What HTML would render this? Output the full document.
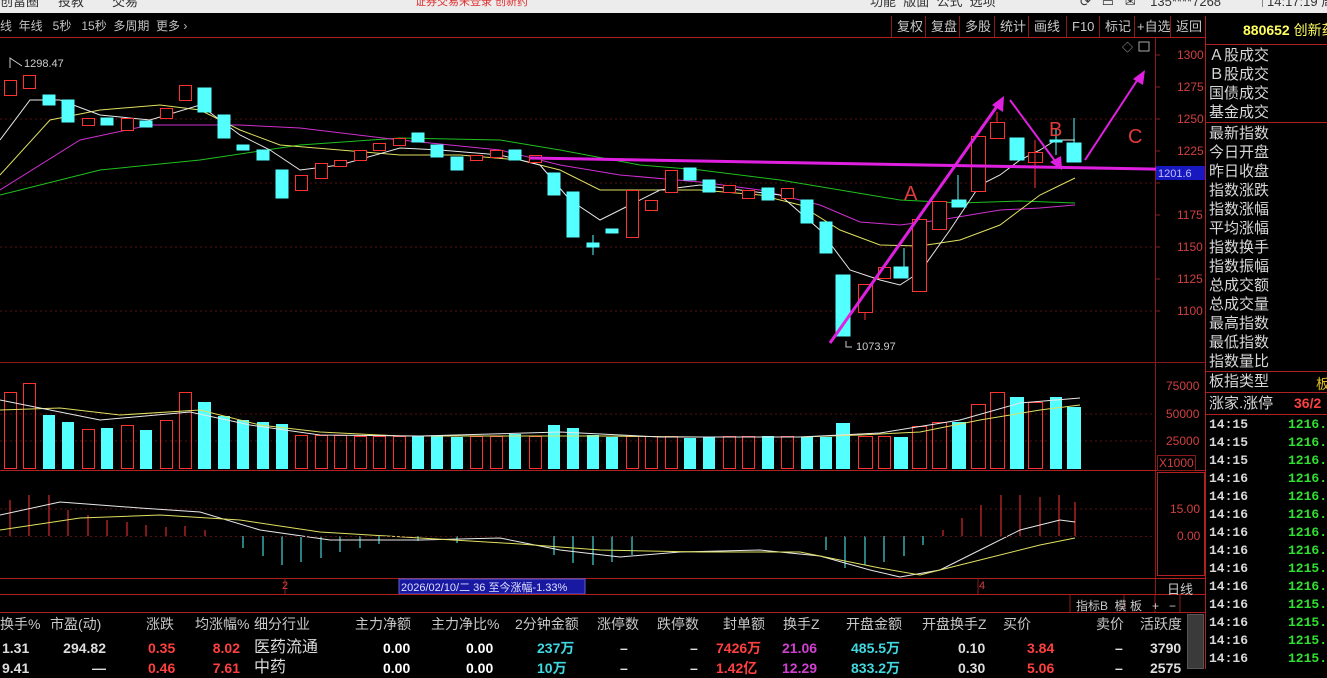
<!DOCTYPE html>
<html><head><meta charset="utf-8"><style>
*{margin:0;padding:0;box-sizing:border-box}
body{width:1327px;height:669px;background:#000;overflow:hidden;position:relative;font-family:"Liberation Sans","Noto Sans CJK SC",sans-serif;color:#c8c8c8}
.a{position:absolute;white-space:nowrap}
#top{left:0;top:0;width:1327px;height:13px;background:#ececec;color:#333;font-size:13px;line-height:10px;overflow:hidden}
.tab{font-size:12px;color:#c0c0c0;top:17px}
.btn{top:16px;height:21px;font-size:13px;color:#c8c8c8;line-height:21px;border-left:1px solid #8a1a1a;padding:0 5px}
.ax{color:#d04040;font-size:12px;font-family:"Liberation Sans",sans-serif}
.lbl{font-size:15px;color:#d8d8d8;left:1209px;line-height:19px}
.tm{left:1209px;font-size:13px;font-weight:bold;color:#d8d8d8;font-family:"Liberation Mono",monospace}
.pv{left:1288px;font-size:13px;font-weight:bold;color:#30e030;font-family:"Liberation Mono",monospace}
.th{top:614px;font-size:14px;color:#c8c8c8}
.td{font-size:14px;font-weight:bold;text-align:right}
</style></head><body>
<div id="top" class="a"><span class="a" style="left:0;top:-3px">创富圈</span><span class="a" style="left:58px;top:-3px">投教</span><span class="a" style="left:112px;top:-3px">交易</span><span class="a" style="left:415px;top:-3px;color:#e03030;font-size:11px">证券交易未登录 创新药</span><span class="a" style="left:870px;top:-3px">功能 &nbsp;版面 &nbsp;公式 &nbsp;选项</span><span class="a" style="left:1080px;top:-3px">⟳ &nbsp; ▭ &nbsp; ✉ &nbsp;&nbsp; 135****7268</span><span class="a" style="left:1262px;top:-3px;border-left:1px solid #888;padding-left:4px">14:17:19 周四</span></div>
<span class="a tab" style="left:0">线 &nbsp;年线 &nbsp; 5秒 &nbsp; 15秒 &nbsp;多周期 &nbsp;更多 ›</span>
<span class="a btn" style="left:891px">复权</span><span class="a btn" style="left:925px">复盘</span><span class="a btn" style="left:959px">多股</span><span class="a btn" style="left:994px">统计</span><span class="a btn" style="left:1028px">画线</span><span class="a btn" style="left:1066px">F10</span><span class="a btn" style="left:1099px">标记</span><span class="a btn" style="left:1134px;padding:0 2px">+自选</span><span class="a btn" style="left:1170px">返回</span>
<span class="a" style="left:1243px;top:20px;font-size:14px;font-weight:bold;color:#ffff60">880652 <span style="font-weight:normal">创新药</span></span>
<svg class="a" style="left:0;top:0" width="1327" height="669">
<g stroke="#8a1a1a" fill="none">
<line x1="0" y1="37.5" x2="1205" y2="37.5" stroke="#b02020"/>
<line x1="1155.5" y1="38" x2="1155.5" y2="594" stroke="#8a1a1a"/>
<line x1="1205.5" y1="16" x2="1205.5" y2="669" stroke="#b02020"/>
<line x1="0" y1="362.5" x2="1205" y2="362.5"/>
<line x1="0" y1="470.5" x2="1205" y2="470.5" stroke="#b02020"/>
<line x1="0" y1="578.5" x2="1205" y2="578.5" stroke="#b02020"/>
<line x1="0" y1="594.5" x2="1205" y2="594.5" stroke="#b02020"/>
<line x1="0" y1="612.5" x2="1205" y2="612.5" stroke="#b02020"/>
<line x1="1205" y1="44.5" x2="1327" y2="44.5" stroke="#b02020"/>
<line x1="1205" y1="122.5" x2="1327" y2="122.5" stroke="#b02020"/>
<line x1="1205" y1="371.5" x2="1327" y2="371.5" stroke="#b02020"/>
<line x1="1205" y1="392.5" x2="1327" y2="392.5" stroke="#b02020"/>
<line x1="1205" y1="414.5" x2="1327" y2="414.5" stroke="#b02020"/>
<rect x="1157.5" y="472.5" width="47" height="103" stroke="#b02020"/>
<line x1="1070" y1="594" x2="1070" y2="612"/><line x1="1124" y1="594" x2="1124" y2="612"/><line x1="1155" y1="594" x2="1155" y2="612"/><line x1="1180" y1="594" x2="1180" y2="612"/>
</g>
<g stroke="#5a1010" stroke-dasharray="2,3">
<line x1="0" y1="119" x2="1155" y2="119"/><line x1="0" y1="183" x2="1155" y2="183"/><line x1="0" y1="247" x2="1155" y2="247"/><line x1="0" y1="311" x2="1155" y2="311"/>
<line x1="0" y1="414" x2="1155" y2="414"/><line x1="0" y1="441" x2="1155" y2="441"/>
<line x1="0" y1="509" x2="1155" y2="509"/>
</g>
<g stroke="#8a1a1a"><line x1="1155" y1="55" x2="1160" y2="55"/><line x1="1155" y1="87" x2="1160" y2="87"/><line x1="1155" y1="119" x2="1160" y2="119"/><line x1="1155" y1="151" x2="1160" y2="151"/><line x1="1155" y1="183" x2="1160" y2="183"/><line x1="1155" y1="215" x2="1160" y2="215"/><line x1="1155" y1="247" x2="1160" y2="247"/><line x1="1155" y1="279" x2="1160" y2="279"/><line x1="1155" y1="311" x2="1160" y2="311"/></g>
<!-- MA lines -->
<g fill="none" stroke-width="1">
<polyline stroke="#20c020" points="0,195 100,170 200,160 300,145 400,138 500,140 560,150 640,165 700,170 780,180 840,190 900,200 960,203 1020,201 1075,203"/>
<polyline stroke="#d030d0" points="0,190 80,140 150,125 240,125 300,128 400,140 500,150 560,165 620,175 700,182 760,190 820,205 860,222 900,225 940,220 1000,210 1040,208 1075,205"/>
<polyline stroke="#e0e060" points="0,175 50,120 100,110 160,105 200,110 240,130 280,145 340,150 400,155 460,155 520,160 560,170 600,190 640,190 700,190 760,195 800,205 840,230 880,245 920,246 960,240 1000,225 1040,195 1075,178"/>
<polyline stroke="#e8e8e8" points="0,140 30,100 60,100 100,115 150,120 200,105 240,135 270,150 300,170 340,165 400,148 440,150 500,155 540,165 570,200 600,220 630,205 660,190 700,185 740,190 780,195 820,230 850,270 880,280 900,285 920,272 950,230 980,185 1000,175 1020,160 1040,150 1056,140 1075,140"/>
</g>
<!-- candles -->
<g stroke="#ff3232" fill="#000">
<rect x="4.5" y="80.5" width="12" height="15"/><rect x="23.5" y="75.5" width="12" height="13"/><rect x="82.5" y="118.5" width="12" height="7"/><rect x="121.5" y="118.5" width="12" height="12"/><rect x="160.5" y="108.5" width="12" height="10"/><rect x="179.5" y="85.5" width="12" height="15"/><rect x="295.5" y="175.5" width="12" height="15"/><rect x="315.5" y="163.5" width="12" height="15"/><rect x="334.5" y="160.5" width="12" height="6"/><rect x="354.5" y="150.5" width="12" height="10"/><rect x="373.5" y="143.5" width="12" height="7"/><rect x="393.5" y="138.5" width="12" height="7"/><rect x="470.5" y="155.5" width="12" height="5"/><rect x="490.5" y="150.5" width="12" height="7"/><rect x="529.5" y="155.5" width="12" height="7"/><rect x="626.5" y="190.5" width="12" height="47"/><rect x="645.5" y="200.5" width="12" height="10"/><rect x="665.5" y="170.5" width="12" height="22"/><rect x="723.5" y="185.5" width="12" height="7"/><rect x="742.5" y="190.5" width="12" height="8"/><rect x="781.5" y="188.5" width="12" height="10"/><rect x="858.5" y="284.5" width="14" height="28"/><rect x="878.5" y="267.5" width="12" height="11"/><rect x="912.5" y="219.5" width="14" height="72"/><rect x="932.5" y="201.5" width="14" height="28"/><rect x="971.5" y="136.5" width="14" height="55"/><rect x="990.5" y="122.5" width="14" height="16"/><rect x="1028.5" y="152.5" width="14" height="10"/>
<line x1="1035" y1="140" x2="1035" y2="188"/><line x1="997" y1="112" x2="997" y2="122"/><line x1="865" y1="312" x2="865" y2="320"/>
</g>
<g fill="#54ffff" stroke="#54ffff">
<line x1="1056" y1="128" x2="1056" y2="155"/><line x1="1074" y1="118" x2="1074" y2="143"/><line x1="904" y1="248" x2="904" y2="268"/><line x1="958" y1="175" x2="958" y2="200"/><line x1="593" y1="235" x2="593" y2="255"/>
<rect x="43" y="95" width="12" height="10"/><rect x="62" y="100" width="12" height="22"/><rect x="101" y="118" width="12" height="7"/><rect x="140" y="121" width="12" height="6"/><rect x="198" y="88" width="13" height="24"/><rect x="218" y="115" width="12" height="23"/><rect x="237" y="145" width="12" height="5"/><rect x="257" y="150" width="12" height="10"/><rect x="276" y="170" width="12" height="28"/><rect x="412" y="133" width="12" height="9"/><rect x="431" y="145" width="12" height="12"/><rect x="451" y="157" width="12" height="13"/><rect x="509" y="150" width="12" height="10"/><rect x="548" y="173" width="12" height="22"/><rect x="567" y="192" width="12" height="45"/><rect x="587" y="243" width="12" height="4"/><rect x="606" y="229" width="12" height="4"/><rect x="684" y="168" width="12" height="12"/><rect x="703" y="180" width="12" height="12"/><rect x="762" y="188" width="12" height="12"/><rect x="801" y="200" width="12" height="23"/><rect x="820" y="222" width="12" height="31"/><rect x="836" y="275" width="14" height="61"/><rect x="894" y="267" width="14" height="11"/><rect x="952" y="200" width="14" height="7"/><rect x="1010" y="138" width="14" height="22"/><rect x="1050" y="140" width="12" height="2"/><rect x="1067" y="143" width="14" height="19"/>
</g>
<!-- annotations -->
<g stroke="#e020e0" fill="none" stroke-width="3">
<line x1="530" y1="158" x2="1205" y2="170"/>
<line x1="830" y1="343" x2="1000" y2="102"/>
<line x1="1010" y1="100" x2="1058" y2="165" stroke-width="2"/>
<line x1="1085" y1="160" x2="1140" y2="76" stroke-width="2"/>
</g>
<g fill="#e020e0"><polygon points="1004,96 1003,112 992,105"/><polygon points="1062,170 1050,162 1061,156"/><polygon points="1145,70 1143,85 1133,79"/></g>
<g fill="#e03a3a" font-size="20" font-family="Liberation Sans"><text x="904" y="200">A</text><text x="1049" y="136">B</text><text x="1128" y="143">C</text></g>
<rect x="1156" y="166" width="49" height="14" fill="#1818c0"/>
<text x="1158" y="177" fill="#c0c0ff" font-size="11">1201.6</text>
<g fill="#ccc" font-size="11"><text x="24" y="67">1298.47</text><text x="856" y="350">1073.97</text></g>
<g stroke="#ccc" fill="none"><path d="M10,68 V58 L22,66"/><path d="M852,347 H846 V341"/></g>
<text x="1122" y="51" fill="#aaa" font-size="11">◇</text><rect x="1139" y="42" width="10" height="9" fill="none" stroke="#aaa"/>
<!-- volume -->
<g fill="#54ffff">
<rect x="43" y="415" width="12" height="54"/><rect x="62" y="422" width="12" height="47"/><rect x="101" y="428" width="12" height="41"/><rect x="140" y="430" width="12" height="39"/><rect x="198" y="402" width="13" height="67"/><rect x="218" y="416" width="12" height="53"/><rect x="237" y="420" width="12" height="49"/><rect x="257" y="422" width="12" height="47"/><rect x="276" y="424" width="12" height="45"/><rect x="412" y="436" width="12" height="33"/><rect x="431" y="436" width="12" height="33"/><rect x="451" y="437" width="12" height="32"/><rect x="509" y="434" width="12" height="35"/><rect x="548" y="425" width="12" height="44"/><rect x="567" y="428" width="12" height="41"/><rect x="587" y="435" width="12" height="34"/><rect x="606" y="437" width="12" height="32"/><rect x="684" y="438" width="12" height="31"/><rect x="703" y="437" width="12" height="32"/><rect x="762" y="436" width="12" height="33"/><rect x="801" y="437" width="12" height="32"/><rect x="820" y="437" width="12" height="32"/><rect x="836" y="423" width="14" height="46"/><rect x="894" y="437" width="14" height="32"/><rect x="952" y="422" width="14" height="47"/><rect x="1010" y="397" width="14" height="72"/><rect x="1050" y="397" width="12" height="72"/><rect x="1067" y="407" width="14" height="62"/>
</g>
<g fill="none" stroke="#ff3232">
<rect x="4.5" y="392.5" width="12" height="76"/><rect x="23.5" y="383.5" width="12" height="85"/><rect x="82.5" y="429.5" width="12" height="39"/><rect x="121.5" y="425.5" width="12" height="43"/><rect x="160.5" y="420.5" width="12" height="48"/><rect x="179.5" y="392.5" width="12" height="76"/><rect x="295.5" y="435.5" width="12" height="33"/><rect x="315.5" y="435.5" width="12" height="33"/><rect x="334.5" y="435.5" width="12" height="33"/><rect x="354.5" y="436.5" width="12" height="32"/><rect x="373.5" y="436.5" width="12" height="32"/><rect x="393.5" y="436.5" width="12" height="32"/><rect x="470.5" y="436.5" width="12" height="32"/><rect x="490.5" y="436.5" width="12" height="32"/><rect x="529.5" y="436.5" width="12" height="32"/><rect x="626.5" y="436.5" width="12" height="32"/><rect x="645.5" y="436.5" width="12" height="32"/><rect x="665.5" y="436.5" width="12" height="32"/><rect x="723.5" y="436.5" width="12" height="32"/><rect x="742.5" y="436.5" width="12" height="32"/><rect x="781.5" y="436.5" width="12" height="32"/><rect x="858.5" y="436.5" width="14" height="32"/><rect x="878.5" y="436.5" width="12" height="32"/><rect x="912.5" y="426.5" width="14" height="42"/><rect x="932.5" y="422.5" width="14" height="46"/><rect x="971.5" y="404.5" width="14" height="64"/><rect x="990.5" y="392.5" width="14" height="76"/><rect x="1028.5" y="402.5" width="14" height="66"/>
</g>
<polyline fill="none" stroke="#e0e060" points="0,410 60,408 120,415 200,410 260,425 320,432 400,436 500,436 600,436 700,437 800,437 860,435 920,432 980,420 1040,410 1080,405"/>
<polyline fill="none" stroke="#e8e8e8" points="0,400 50,410 100,420 190,412 250,425 320,435 420,436 560,432 660,437 800,437 880,433 960,420 1020,403 1080,398"/>
<!-- macd -->
<g stroke="#ff3232">
<line x1="10" y1="536" x2="10" y2="500"/><line x1="29" y1="536" x2="29" y2="495"/><line x1="49" y1="536" x2="49" y2="495"/><line x1="68" y1="536" x2="68" y2="510"/><line x1="88" y1="536" x2="88" y2="515"/><line x1="107" y1="536" x2="107" y2="520"/><line x1="127" y1="536" x2="127" y2="522"/><line x1="146" y1="536" x2="146" y2="525"/><line x1="166" y1="536" x2="166" y2="527"/><line x1="185" y1="536" x2="185" y2="526"/><line x1="205" y1="536" x2="205" y2="530"/>
<line x1="943" y1="536" x2="943" y2="530"/><line x1="962" y1="536" x2="962" y2="518"/><line x1="981" y1="536" x2="981" y2="505"/><line x1="1001" y1="536" x2="1001" y2="495"/><line x1="1020" y1="536" x2="1020" y2="495"/><line x1="1040" y1="536" x2="1040" y2="497"/><line x1="1059" y1="536" x2="1059" y2="495"/><line x1="1075" y1="536" x2="1075" y2="502"/>
</g>
<g stroke="#54ffff">
<line x1="243" y1="536" x2="243" y2="548"/><line x1="263" y1="536" x2="263" y2="556"/><line x1="282" y1="536" x2="282" y2="565"/><line x1="301" y1="536" x2="301" y2="562"/><line x1="321" y1="536" x2="321" y2="558"/><line x1="340" y1="536" x2="340" y2="552"/><line x1="360" y1="536" x2="360" y2="548"/><line x1="379" y1="536" x2="379" y2="544"/><line x1="418" y1="536" x2="418" y2="541"/><line x1="457" y1="536" x2="457" y2="543"/><line x1="554" y1="536" x2="554" y2="555"/><line x1="573" y1="536" x2="573" y2="563"/><line x1="593" y1="536" x2="593" y2="565"/><line x1="612" y1="536" x2="612" y2="562"/><line x1="632" y1="536" x2="632" y2="555"/><line x1="826" y1="536" x2="826" y2="550"/><line x1="845" y1="536" x2="845" y2="568"/><line x1="865" y1="536" x2="865" y2="565"/><line x1="884" y1="536" x2="884" y2="562"/><line x1="904" y1="536" x2="904" y2="556"/><line x1="923" y1="536" x2="923" y2="545"/>
</g>
<polyline fill="none" stroke="#e8e8e8" points="0,515 60,502 140,508 200,512 260,530 330,540 420,540 500,538 560,550 620,557 680,552 760,550 820,556 870,570 900,577 940,570 980,550 1020,530 1060,520 1075,522"/>
<polyline fill="none" stroke="#e0e060" points="0,530 80,518 160,515 240,520 320,532 420,538 520,544 600,550 700,552 800,552 880,568 920,575 980,560 1040,545 1075,538"/>
<line x1="0" y1="536.5" x2="1155" y2="536.5" stroke="#5a1010" stroke-dasharray="2,3"/>
<line x1="285" y1="578" x2="285" y2="594" stroke="#8a1a1a"/><line x1="978" y1="578" x2="978" y2="594" stroke="#8a1a1a"/>
<rect x="399" y="579" width="186" height="15" fill="#1818a0" stroke="#6060d0"/>
<line x1="0" y1="594.5" x2="1205" y2="594.5" stroke="#b02020"/>
</svg>
<span class="a ax" style="left:1177px;top:48px">1300</span><span class="a ax" style="left:1177px;top:80px">1275</span><span class="a ax" style="left:1177px;top:112px">1250</span><span class="a ax" style="left:1177px;top:144px">1225</span><span class="a ax" style="left:1177px;top:208px">1175</span><span class="a ax" style="left:1177px;top:240px">1150</span><span class="a ax" style="left:1177px;top:272px">1125</span><span class="a ax" style="left:1177px;top:304px">1100</span>
<span class="a ax" style="left:1166px;top:379px">75000</span><span class="a ax" style="left:1166px;top:407px">50000</span><span class="a ax" style="left:1166px;top:434px">25000</span><span class="a ax" style="left:1157px;top:455px;border:1px solid #8a1a1a;padding:0 1px">X1000</span>
<span class="a ax" style="left:1170px;top:502px">15.00</span><span class="a ax" style="left:1177px;top:529px">0.00</span>
<span class="a" style="left:282px;top:580px;font-size:11px;color:#d04040">2</span><span class="a" style="left:979px;top:580px;font-size:11px;color:#d04040">4</span>
<span class="a" style="left:401px;top:579px;font-size:11px;color:#e0e0ff">2026/02/10/二 36 至今涨幅-1.33%</span>
<span class="a" style="left:1167px;top:579px;font-size:13px">日线</span>
<span class="a" style="left:1076px;top:597px;font-size:12px">指标B &nbsp;模 板 &nbsp; + &nbsp; −</span>
<div class="a lbl" style="top:46px">Ａ股成交<br>Ｂ股成交<br>国债成交<br>基金成交</div>
<div class="a lbl" style="top:124px">最新指数<br>今日开盘<br>昨日收盘<br>指数涨跌<br>指数涨幅<br>平均涨幅<br>指数换手<br>指数振幅<br>总成交额<br>总成交量<br>最高指数<br>最低指数<br>指数量比</div>
<div class="a lbl" style="top:372px">板指类型</div><span class="a" style="left:1316px;top:374px;font-size:14px;color:#e0c020">板</span>
<div class="a lbl" style="top:394px">涨家.涨停</div><span class="a" style="left:1294px;top:395px;font-size:14px;font-weight:bold;color:#ff4040">36/2</span>
<div class="a tm" style="top:416px;line-height:18px">14:15<br>14:15<br>14:15<br>14:16<br>14:16<br>14:16<br>14:16<br>14:16<br>14:16<br>14:16<br>14:16<br>14:16<br>14:16<br>14:16</div>
<div class="a pv" style="top:416px;line-height:18px">1216.6<br>1216.5<br>1216.4<br>1216.3<br>1216.2<br>1216.1<br>1216.1<br>1216.0<br>1215.9<br>1216.0<br>1215.9<br>1215.9<br>1215.8<br>1215.8</div>
<span class="a th" style="left:0">换手%</span><span class="a th" style="left:50px">市盈(动)</span><span class="a th" style="left:146px">涨跌</span><span class="a th" style="left:195px">均涨幅%</span><span class="a th" style="left:254px">细分行业</span><span class="a th" style="left:355px">主力净额</span><span class="a th" style="left:431px">主力净比%</span><span class="a th" style="left:515px">2分钟金额</span><span class="a th" style="left:597px">涨停数</span><span class="a th" style="left:657px">跌停数</span><span class="a th" style="left:723px">封单额</span><span class="a th" style="left:783px">换手Z</span><span class="a th" style="left:846px">开盘金额</span><span class="a th" style="left:922px">开盘换手Z</span><span class="a th" style="left:1003px">买价</span><span class="a th" style="left:1096px">卖价</span><span class="a th" style="left:1140px">活跃度</span>
<div class="a" style="left:0;top:638px;width:1190px;height:31px;font-size:14px;font-weight:bold;line-height:20px">
<span class="a" style="left:2px;color:#ddd">1.31<br>9.41</span>
<span class="a" style="left:56px;color:#ddd;width:50px;text-align:right">294.82<br>—</span>
<span class="a" style="left:148px;color:#ff4040">0.35<br>0.46</span>
<span class="a" style="left:200px;color:#ff4040;width:40px;text-align:right">8.02<br>7.61</span>
<span class="a" style="left:254px;color:#ddd;font-weight:normal;font-size:16px;line-height:20px">医药流通<br>中药</span>
<span class="a" style="left:383px;color:#fff">0.00<br>0.00</span>
<span class="a" style="left:466px;color:#fff">0.00<br>0.00</span>
<span class="a" style="left:537px;color:#40d8e0">237万<br>10万</span>
<span class="a" style="left:620px;color:#ddd">–<br>–</span><span class="a" style="left:690px;color:#ddd">–<br>–</span>
<span class="a" style="left:716px;color:#ff4040">7426万<br>1.42亿</span>
<span class="a" style="left:782px;color:#d040d0">21.06<br>12.29</span>
<span class="a" style="left:851px;color:#40d8e0">485.5万<br>833.2万</span>
<span class="a" style="left:958px;color:#ddd">0.10<br>0.30</span>
<span class="a" style="left:1027px;color:#ff4040">3.84<br>5.06</span>
<span class="a" style="left:1115px;color:#ddd">–<br>–</span>
<span class="a" style="left:1150px;color:#ddd">3790<br>2575</span>
</div>
<div class="a" style="left:1187px;top:614px;width:17px;height:55px;background:#3a3a3a;border:1px solid #555"></div>
</body></html>
